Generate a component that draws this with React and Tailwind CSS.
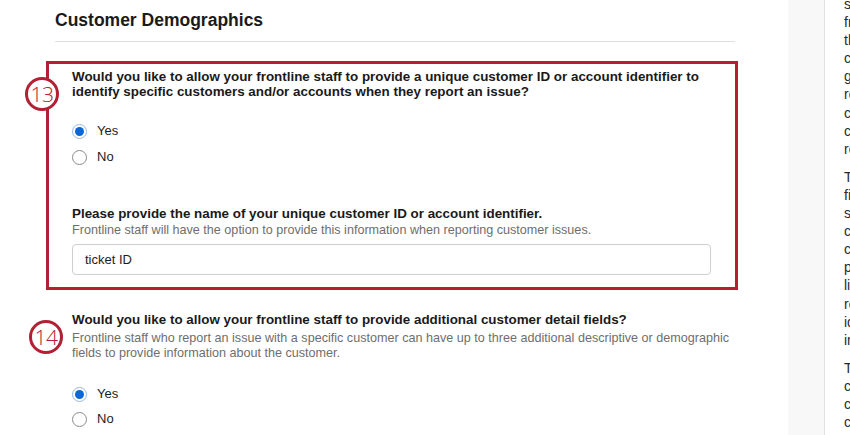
import React from "react";

const RED = "border-[#b32034]";

function Radio({ checked, label }) {
  return (
    <div className="flex items-center h-[26px]">
      <span
        className={
          "flex items-center justify-center w-[15px] h-[15px] rounded-full border bg-white " +
          (checked ? "border-[#9fb6d6]" : "border-[#8a8a8a]")
        }
      >
        {checked && <span className="w-[9px] h-[9px] rounded-full bg-[#0b67d6]" />}
      </span>
      <span className="ml-[10px] text-[13px] text-[#1c1c1c]">{label}</span>
    </div>
  );
}

function Badge({ n }) {
  return (
    <div
      className={
        "flex items-center justify-center w-[34px] h-[34px] rounded-full border-[3px] bg-white text-[#b32034] text-[21px] leading-none " +
        RED
      }
    >
      <span className="tracking-[-0.5px]" style={{ fontFamily: '"Open Sans", sans-serif', fontWeight: 300 }}>{n}</span>
    </div>
  );
}

const para1 = ["see", "from", "the", "customer", "give", "report", "can", "create", "record"];
const para2 = ["The", "field", "should", "contain", "customer", "please", "like", "report", "identifier", "in"];
const para3 = ["The", "can", "choose", "customer"];

export default function App() {
  return (
    <div
      className="w-[850px] h-[435px] overflow-hidden bg-white flex"
      style={{ fontFamily: '"Liberation Sans", Arial, sans-serif' }}
    >
      {/* Main column */}
      <div className="w-[788px] shrink-0 flex flex-col">
        <div className="pl-[55px] w-[735px]">
          <h2 className="text-[17.5px] font-bold text-[#1a1a1a] leading-[20px] pt-[10px]">Customer Demographics</h2>
          <div className="mt-[11px] h-px bg-[#dedede]" />
        </div>

        {/* Q13 annotated box */}
        <div className={"relative mt-[19px] ml-[46px] w-[692px] h-[229px] border-[3px] pl-[23px] pt-[5px] " + RED}>
          <div className="absolute left-[-24px] top-[13px]">
            <Badge n="13" />
          </div>
          <p className="text-[13.4px] font-bold text-[#1a1a1a] leading-[15px] w-[650px]">
            Would you like to allow your frontline staff to provide a unique customer ID or account identifier to identify specific customers and/or accounts when they report an issue?
          </p>
          <div className="mt-[19px] flex flex-col">
            <Radio checked label="Yes" />
            <Radio label="No" />
          </div>
          <p className="mt-[36px] text-[13.4px] font-bold text-[#1a1a1a] leading-[16px]">
            Please provide the name of your unique customer ID or account identifier.
          </p>
          <p className="mt-[0px] text-[12.6px] text-[#6e6e6e] leading-[16px]">
            Frontline staff will have the option to provide this information when reporting customer issues.
          </p>
          <div className="mt-[6px] w-[639px] h-[31px] rounded-[4px] border border-[#cfcfcf] flex items-center pl-[12px] text-[13px] text-[#1c1c1c]">
            ticket ID
          </div>
        </div>

        {/* Q14 */}
        <div className="relative mt-[22px] pl-[72px]">
          <div className="absolute left-[29px] top-[8px]">
            <Badge n="14" />
          </div>
          <p className="text-[13.4px] font-bold text-[#1a1a1a] leading-[16px]">
            Would you like to allow your frontline staff to provide additional customer detail fields?
          </p>
          <p className="mt-[3px] text-[12.6px] text-[#6e6e6e] leading-[14.5px] w-[660px]">
            Frontline staff who report an issue with a specific customer can have up to three additional descriptive or demographic fields to provide information about the customer.
          </p>
          <div className="mt-[21px] flex flex-col">
            <Radio checked label="Yes" />
            <div className="-mt-px">
              <Radio label="No" />
            </div>
          </div>
        </div>
      </div>

      {/* Side gray panel */}
      <div className="w-[37px] shrink-0 bg-[#f8f8f8] border-r border-[#e2e2e2]" />

      {/* Right text column */}
      <div className="pl-[19px] -mt-[5px] w-[300px] shrink-0 text-[14px] leading-[18.1px] text-[#2a2a2a]">
        <div className="flex flex-col">
          {para1.map((w, i) => (
            <span key={"a" + i} className="whitespace-nowrap">{w}</span>
          ))}
        </div>
        <div className="flex flex-col mt-[10px]">
          {para2.map((w, i) => (
            <span key={"b" + i} className="whitespace-nowrap">{w}</span>
          ))}
        </div>
        <div className="flex flex-col mt-[10px]">
          {para3.map((w, i) => (
            <span key={"c" + i} className="whitespace-nowrap">{w}</span>
          ))}
        </div>
      </div>
    </div>
  );
}
